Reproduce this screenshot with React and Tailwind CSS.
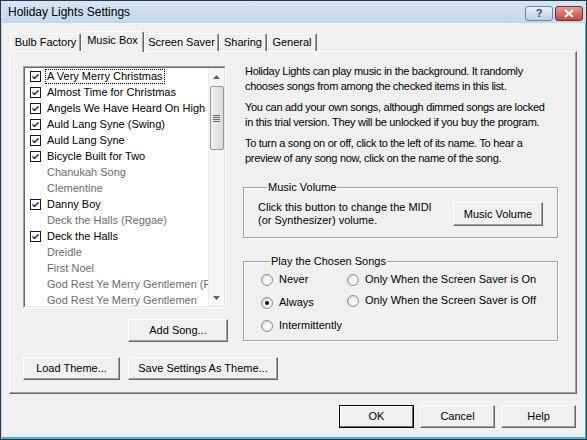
import React from "react";

const songs = [
  ["A Very Merry Christmas", true],
  ["Almost Time for Christmas", true],
  ["Angels We Have Heard On High", true],
  ["Auld Lang Syne (Swing)", true],
  ["Auld Lang Syne", true],
  ["Bicycle Built for Two", true],
  ["Chanukah Song", false],
  ["Clementine", false],
  ["Danny Boy", true],
  ["Deck the Halls (Reggae)", false],
  ["Deck the Halls", true],
  ["Dreidle", false],
  ["First Noel", false],
  ["God Rest Ye Merry Gentlemen (Reggae)", false],
  ["God Rest Ye Merry Gentlemen", false],
];

const btn3d =
  "h-[23px] bg-[#f0f0f0] border border-t-white border-l-white border-r-[#696969] border-b-[#696969] shadow-[inset_-1px_-1px_0_#a0a0a0] flex items-center justify-center text-[11px] text-black whitespace-nowrap";

const Checkbox = () => (
  <svg width="11" height="11" viewBox="0 0 11 11" className="shrink-0">
    <rect x="0.5" y="0.5" width="10" height="10" fill="#fff" stroke="#1a1a1a" />
    <path d="M2.5 5 L4.5 7 L8.5 3 M2.5 6 L4.5 8 L8.5 4" stroke="#000" strokeWidth="1" fill="none" />
  </svg>
);

const Radio = ({ on }) => (
  <span className="w-[12px] h-[12px] rounded-full border border-[#8e8f8f] bg-[radial-gradient(circle_at_60%_60%,#ffffff_0%,#f4f4f4_40%,#c9c9c9_100%)] flex items-center justify-center shrink-0">
    {on && <span className="w-[4px] h-[4px] rounded-full bg-[#111]" />}
  </span>
);

const Tab = ({ w, active, children }) => (
  <div
    className={
      active
        ? `${w} h-[21px] -mb-px relative z-10 bg-[#f0f0f0] border-t border-l border-white border-r border-r-[#696969] shadow-[inset_-1px_0_0_#a0a0a0] rounded-t-[2px] flex items-start justify-center pt-[2px]`
        : `${w} h-[18px] border-t border-l border-white border-r border-r-[#696969] shadow-[inset_-1px_0_0_#a0a0a0] rounded-t-[2px] flex items-center justify-center`
    }
  >
    {children}
  </div>
);

export default function App() {
  return (
    <div className="w-[587px] h-[440px] flex flex-col bg-[#c4d8ec] border border-[#27384a] overflow-hidden font-['Liberation_Sans',Arial,sans-serif] text-[11px] text-black leading-[13px]">
      {/* Title bar */}
      <div className="h-[22px] shrink-0 bg-linear-to-b from-[#d8e6f4] to-[#c2d6eb] flex justify-between">
        <div className="pl-[7px] pt-[4px] text-[12px] leading-[15px] text-black">Holiday Lights Settings</div>
        <div className="flex gap-[2px] pt-[5px] pr-[3px]">
          <div className="w-[28px] h-[15px] rounded-[3px] border border-[#6f86a0] bg-linear-to-b from-[#eaf1f8] to-[#bccfe3] flex items-center justify-center text-[11px] font-bold leading-none text-[#3d4a58]">
            ?
          </div>
          <div className="w-[28px] h-[15px] rounded-[3px] border border-[#7c2d25] bg-linear-to-b from-[#e39d8f] to-[#c4473a] flex items-center justify-center">
            <svg width="12" height="9" viewBox="0 0 12 9">
              <path d="M2 1 L10 8 M10 1 L2 8" stroke="#fff" strokeWidth="2.2" />
            </svg>
          </div>
        </div>
      </div>

      {/* Client */}
      <div className="flex-1 bg-[#f0f0f0] ml-[1px] border-b-2 border-r border-[#3eb6e4] flex flex-col">
        <div className="flex items-end h-[20px] ml-[8px] mt-[8px]">
          <Tab w="w-[71px]">Bulb Factory</Tab>
          <Tab w="w-[63px]" active>Music Box</Tab>
          <Tab w="w-[75px]">Screen Saver</Tab>
          <Tab w="w-[48px]">Sharing</Tab>
          <Tab w="w-[50px]">General</Tab>
        </div>

        <div className="w-[568px] h-[343px] ml-[7px] border border-t-white border-l-white border-r-[#696969] border-b-[#696969] shadow-[inset_-1px_-1px_0_#a0a0a0] pl-[13px] pt-[14px] flex flex-col">
          <div className="flex">
            {/* Left column */}
            <div className="w-[205px] flex flex-col">
              <div className="w-[203px] h-[242px] border border-t-[#a0a0a0] border-l-[#a0a0a0] border-r-white border-b-white">
                <div className="w-full h-full border border-t-[#696969] border-l-[#696969] border-r-[#e3e3e3] border-b-[#e3e3e3] bg-white flex">
                  <div className="flex-1 overflow-hidden">
                    {songs.map(([name, on], i) => (
                      <div key={i} className="h-[16px] flex items-center pl-[5px] gap-[6px] whitespace-nowrap">
                        {on ? <Checkbox /> : <span className="w-[11px] shrink-0" />}
                        <span
                          className={`${on ? "text-black" : "text-[#6d6d6d]"} ${
                            i === 0 ? "border border-dotted border-black px-[1px] -ml-[2px]" : ""
                          }`}
                        >
                          {name}
                        </span>
                      </div>
                    ))}
                  </div>
                  {/* Scrollbar */}
                  <div className="w-[16px] shrink-0 bg-[#f6f6f6] border-l border-[#ececec] flex flex-col items-center">
                    <div className="h-[17px] flex items-center justify-center">
                      <svg width="7" height="4" viewBox="0 0 7 4">
                        <path d="M0 4 L3.5 0 L7 4 Z" fill="#606060" />
                      </svg>
                    </div>
                    <div className="w-[14px] h-[64px] mt-[1px] rounded-[2px] border border-[#979797] bg-linear-to-r from-[#f2f2f2] to-[#d8d8d8] flex flex-col items-center justify-center gap-[1px]">
                      <span className="w-[7px] h-px bg-[#6a6a6a]" />
                      <span className="w-[7px] h-px bg-[#6a6a6a]" />
                      <span className="w-[7px] h-px bg-[#6a6a6a]" />
                      <span className="w-[7px] h-px bg-[#6a6a6a]" />
                    </div>
                    <div className="flex-1" />
                    <div className="h-[17px] flex items-center justify-center">
                      <svg width="7" height="4" viewBox="0 0 7 4">
                        <path d="M0 0 L3.5 4 L7 0 Z" fill="#606060" />
                      </svg>
                    </div>
                  </div>
                </div>
              </div>
              <div className={`${btn3d} w-[100px] mt-[11px] ml-[105px]`}>Add Song...</div>
            </div>

            {/* Right column */}
            <div className="w-[315px] ml-[15px] flex flex-col">
              <div className="pl-[2px] -mt-[2px] leading-[15px] flex flex-col gap-[6px] whitespace-nowrap tracking-[-0.3px]">
                <p>
                  Holiday Lights can play music in the background. It randomly
                  <br />
                  chooses songs from among the checked items in this list.
                </p>
                <p>
                  You can add your own songs, although dimmed songs are locked
                  <br />
                  in this trial version. They will be unlocked if you buy the program.
                </p>
                <p>
                  To turn a song on or off, click to the left of its name. To hear a
                  <br />
                  preview of any song now, click on the name of the song.
                </p>
              </div>

              <fieldset className="mt-[15px] border border-[#a0a0a0] shadow-[inset_1px_1px_0_#fff,1px_1px_0_#fff] pl-[14px] pr-[14px] pt-[7px] pb-[10px] flex items-center justify-between">
                <legend className="ml-[9px] px-[1px] leading-[13px]">Music Volume</legend>
                <div className="leading-[13px] whitespace-nowrap">
                  Click this button to change the MIDI
                  <br />
                  (or Synthesizer) volume.
                </div>
                <div className={`${btn3d} w-[90px] h-[24px]`}>Music Volume</div>
              </fieldset>

              <fieldset className="mt-[17px] border border-[#a0a0a0] shadow-[inset_1px_1px_0_#fff,1px_1px_0_#fff] pl-[17px] pb-[3px] flex">
                <legend className="ml-[9px] px-[1px] leading-[13px]">Play the Chosen Songs</legend>
                <div className="w-[86px] flex flex-col">
                  {[["Never", false], ["Always", true], ["Intermittently", false]].map(([l, on]) => (
                    <div key={l} className="h-[23px] flex items-center gap-[6px] whitespace-nowrap">
                      <Radio on={on} />
                      <span>{l}</span>
                    </div>
                  ))}
                </div>
                <div className="flex flex-col pt-[1px]">
                  {["Only When the Screen Saver is On", "Only When the Screen Saver is Off"].map((l) => (
                    <div key={l} className="h-[21px] flex items-center gap-[6px] whitespace-nowrap">
                      <Radio />
                      <span>{l}</span>
                    </div>
                  ))}
                </div>
              </fieldset>
            </div>
          </div>

          <div className="flex gap-[8px] mt-[15px]">
            <div className={`${btn3d} w-[97px]`}>Load Theme...</div>
            <div className={`${btn3d} w-[150px]`}>Save Settings As Theme...</div>
          </div>
        </div>

        <div className="flex gap-[6px] mt-[11px] ml-[337px]">
          <div className="w-[75px] h-[23px] border border-black flex">
            <div className="flex-1 bg-[#f0f0f0] border border-t-white border-l-white border-r-[#696969] border-b-[#696969] flex items-center justify-center">
              OK
            </div>
          </div>
          <div className={`${btn3d} w-[75px]`}>Cancel</div>
          <div className={`${btn3d} w-[75px]`}>Help</div>
        </div>
      </div>
    </div>
  );
}
